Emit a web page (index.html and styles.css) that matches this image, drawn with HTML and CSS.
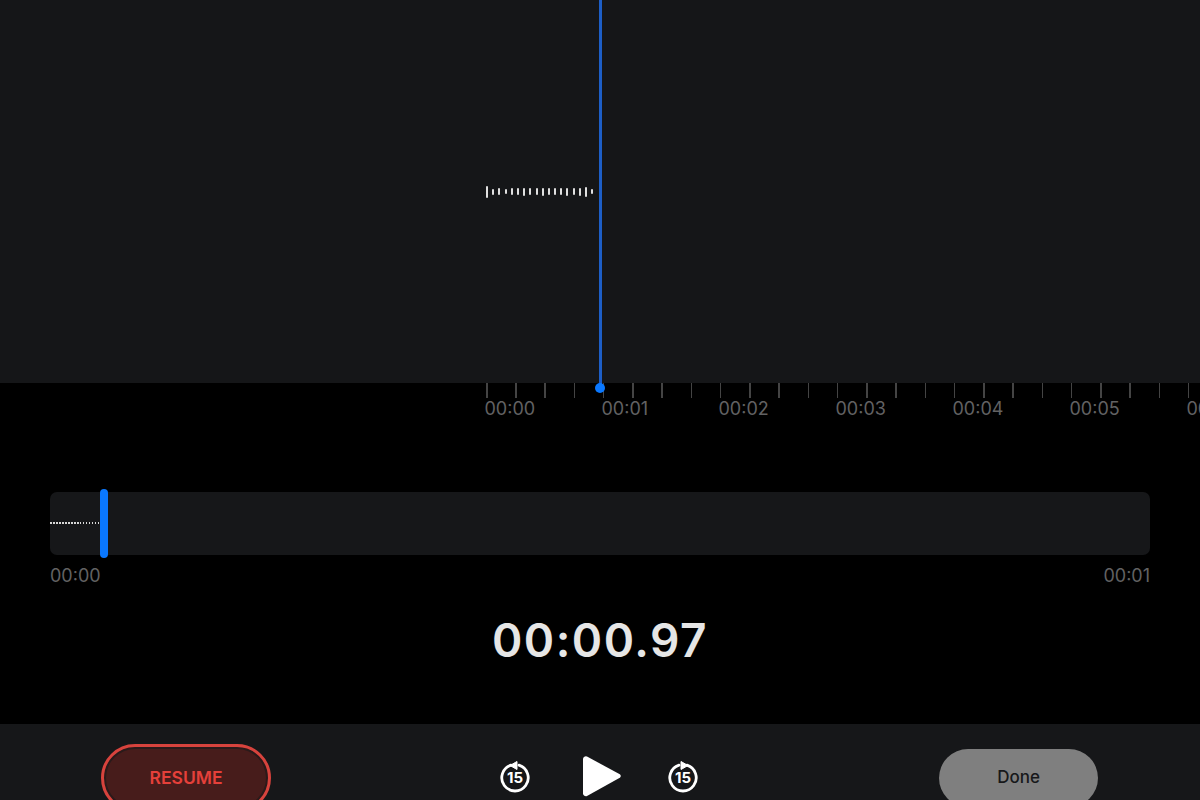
FILE: index.html
```html
<!DOCTYPE html>
<html lang="en">
<head>
<meta charset="utf-8">
<title>Voice memo</title>
<link rel="stylesheet" href="styles.css">
</head>
<body>
<main class="app">
  <section class="wave-panel">
    <div class="wave">
      <i class="b h12"></i><i class="b h6"></i><i class="b h7"></i><i class="b h5"></i><i class="b h7"></i><i class="b h7"></i><i class="b h8"></i><i class="b h7"></i><i class="b h7"></i><i class="b h8"></i><i class="b h7"></i><i class="b h7"></i><i class="b h7"></i><i class="b h8"></i><i class="b h7"></i><i class="b h8"></i><i class="b h10"></i><i class="b h5"></i>
    </div>
    <div class="playhead"><span class="playhead-dot"></span></div>
  </section>
  <section class="ruler">
    <div class="ticks"></div>
    <div class="ruler-labels">
      <span>00:00</span><span>00:01</span><span>00:02</span><span>00:03</span><span>00:04</span><span>00:05</span><span>00:06</span>
    </div>
  </section>
  <section class="overview">
    <div class="overview-track">
      <div class="dots"></div>
      <div class="handle"></div>
    </div>
    <div class="overview-labels"><span>00:00</span><span>00:01</span></div>
  </section>
  <div class="timer">00:00.97</div>
  <footer class="toolbar">
    <button class="resume"><span>RESUME</span></button>
    <div class="controls">
      <svg class="skip" viewBox="0 0 32 34" aria-label="Back 15">
        <path d="M12 6.200A13.200 13.200 0 1 0 20 6.200" fill="none" stroke="#fff" stroke-width="2.800" stroke-linecap="round"/>
        <path d="M18 2.500v8L11 6.500z" fill="#fff" stroke="#fff" stroke-linejoin="round"/>
        <text x="16" y="24.300" text-anchor="middle" class="skip-text">15</text>
      </svg>
      <svg class="play" viewBox="0 0 40 42" aria-label="Play">
        <path d="M5 1.500 37.800 19.300a2 2 0 0 1 0 3.400L5 41a2.800 2.800 0 0 1-4-2.500V4A2.800 2.800 0 0 1 5 1.500z" fill="#fff"/>
      </svg>
      <svg class="skip" viewBox="0 0 32 34" aria-label="Forward 15">
        <path d="M20 6.200A13.200 13.200 0 1 1 12 6.200" fill="none" stroke="#fff" stroke-width="2.800" stroke-linecap="round"/>
        <path d="M14 2.500v8L21 6.500z" fill="#fff" stroke="#fff" stroke-linejoin="round"/>
        <text x="16" y="24.300" text-anchor="middle" class="skip-text">15</text>
      </svg>
    </div>
    <button class="done">Done</button>
  </footer>
</main>
</body>
</html>
```
FILE: styles.css
```css
* { box-sizing: border-box; }
html, body { margin: 0; height: 100%; }
body { background: #000; font-family: Inter, "Liberation Sans", sans-serif; overflow: hidden; }
.app { width: 1200px; height: 800px; display: flex; flex-direction: column; overflow: hidden; }

.wave-panel { position: relative; flex: 0 0 383px; background: #151618; display: flex; align-items: center; padding-left: 486px; }
.wave { display: flex; align-items: center; gap: 4.200px; }
.b { display: block; width: 2px; background: #e0e0e0; border-radius: 1px; }
.h5 { height: 5px; } .h6 { height: 6px; } .h7 { height: 7px; } .h8 { height: 8px; } .h10 { height: 10px; } .h12 { height: 12px; }
.playhead { position: absolute; left: 599px; top: 0; width: 3px; height: 388px; background: #1d5ec6; }
.playhead-dot { position: absolute; left: -4px; bottom: -5px; width: 10px; height: 10px; border-radius: 50%; background: #0a78ff; }

.ruler { flex: 0 0 42px; padding-left: 486px; }
.ticks { height: 15px; background: repeating-linear-gradient(to right, #444 0, #444 1.500px, transparent 1.500px, transparent 29.250px); }
.ruler-labels { display: flex; margin: 1px 0 0 -1.500px; color: #626263; font-size: 18px; line-height: 20px; white-space: nowrap; }
.ruler-labels span { flex: 0 0 117px; }

.overview { margin: 67px 50px 0; }
.overview-track { position: relative; height: 63px; background: #161719; border-radius: 7px; display: flex; align-items: center; }
.dots { width: 51px; height: 2px; margin-top: -1px; background: repeating-linear-gradient(to right, #d8d8d8 0, #d8d8d8 1.500px, transparent 1.500px, transparent 3px); }
.handle { position: absolute; left: 50px; top: -3px; width: 8px; height: 69px; border-radius: 4px; background: #0a78ff; }
.overview-labels { display: flex; justify-content: space-between; margin-top: 11px; color: #626263; font-size: 18px; line-height: 20px; }

.timer { margin-top: 27px; text-align: center; font-size: 46px; line-height: 54px; font-weight: 600; letter-spacing: 1.500px; color: #e6e6e6; }

.toolbar { margin-top: 57px; flex: 0 0 76px; background: #161719; display: flex; align-items: flex-start; padding-left: 101px; }
.resume { flex: 0 0 170px; height: 68px; margin-top: 20px; padding: 0 0 2px; border: 3px solid #d7433d; border-radius: 34px; background: #471c1b; box-shadow: inset 0 0 0 2px #2a1a1a; color: #e5403a; font: 600 17.500px Inter, sans-serif; }
.controls { flex: none; display: flex; align-items: flex-start; margin-left: 228px; padding-top: 31px; }
.skip { width: 32px; height: 34px; display: block; margin-top: 4px; }
.skip-text { font: 700 15px Inter, sans-serif; fill: #fff; }
.play { width: 40px; height: 42px; display: block; margin: 0 45px 0 51px; }
.done { flex: 0 0 159px; height: 58px; margin: 25px 0 0 240px; padding: 0 0 2px; border: 0; border-radius: 29px; background: #7f7f7f; color: #17181a; font: 500 17px Inter, sans-serif; }
```
